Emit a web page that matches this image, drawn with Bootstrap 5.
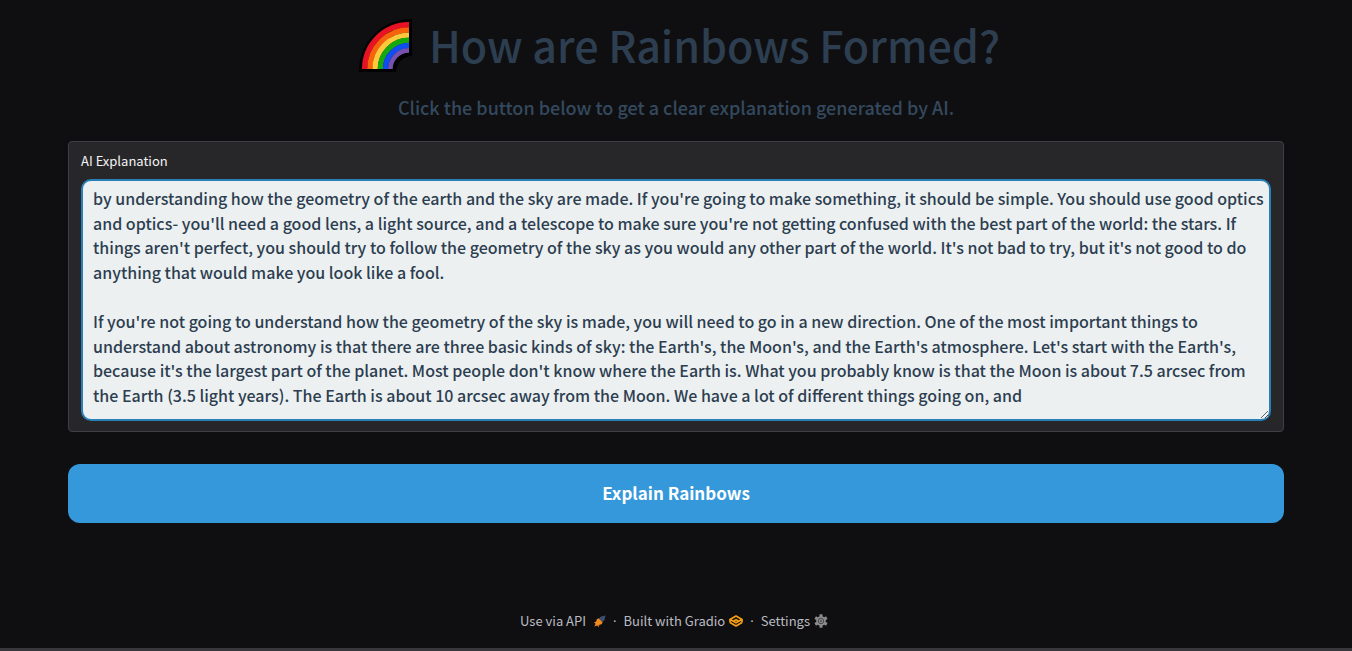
<!DOCTYPE html>
<html lang="en" data-bs-theme="dark">
<head>
<meta charset="utf-8">
<meta name="viewport" content="width=device-width, initial-scale=1">
<title>How are Rainbows Formed?</title>
<link href="https://cdn.jsdelivr.net/npm/bootstrap@5.3.0/dist/css/bootstrap.min.css" rel="stylesheet">
<style>
  body { background: #0f0f11; font-family: "Noto Sans CJK SC", "Noto Sans", sans-serif; border-bottom: 3px solid #38373b; }
  .page-main { padding: 16px 68px 0; }
  .page-title { font-size: 43px; line-height: 56px; font-weight: 500; color: #2c3e50; gap: 10px; }
  .page-title svg { margin: 0 7px; }
  .page-intro { font-size: 18px; line-height: 28px; font-weight: 500; color: #34495e; margin: 21px 0 20px; }
  .answer-panel { background: #27272a; border: 1px solid #3f3f46; border-radius: 4px; padding: 9px 12px 10px; }
  .answer-label { font-size: 13px; line-height: 20px; color: #f4f4f5; margin-bottom: 8px; }
  .answer-text, .answer-text:focus { height: 242px; padding: 5px 4px 5px 10px; border: 2px solid #2980b9; border-radius: 10px; background: #ecf0f1; color: #2c3e50; font-size: 16px; line-height: 1.54; font-weight: 500; overflow: hidden; }
  .btn-explain { --bs-btn-color: #fff; --bs-btn-bg: #3498db; --bs-btn-hover-color: #fff; --bs-btn-hover-bg: #2980b9; --bs-btn-active-bg: #2980b9; font-size: 17px; line-height: 27px; font-weight: 700; padding: 15px 16px 17px; border: 0; border-radius: 12px; margin-top: 32px; }
  .page-footer { padding: 0 4px 17px 0; font-size: 13px; line-height: 20px; color: #bbbbc2; gap: 7px; }
  .page-footer a { color: inherit; text-decoration: none; }
  .page-footer span { font-family: "Noto Sans", sans-serif; }
</style>
</head>
<body class="d-flex flex-column min-vh-100">
<main class="page-main">
  <h1 class="page-title d-flex justify-content-center align-items-end mb-0">
    <svg width="53" height="53" viewBox="0 0 53 53" aria-hidden="true">
      <path d="M0 53A52 52 0 0 1 53 0V37A16 16 0 0 0 37 53Z" fill="#000"/>
      <g fill="none" stroke-width="5.4">
        <path d="M5.7 50A44.3 44.3 0 0 1 50 5.7" stroke="#e81224"/>
        <path d="M10.9 50A39.1 39.1 0 0 1 50 10.9" stroke="#f7630c"/>
        <path d="M16.1 50A33.9 33.9 0 0 1 50 16.1" stroke="#ffc83d"/>
        <path d="M21.3 50A28.7 28.7 0 0 1 50 21.3" stroke="#16a80c"/>
        <path d="M26.5 50A23.5 23.5 0 0 1 50 26.5" stroke="#0f4df0"/>
        <path d="M31.4 50A18.6 18.6 0 0 1 50 31.4" stroke="#7651b0" stroke-width="4.6"/>
      </g>
    </svg>
    <span>How are Rainbows Formed?</span>
  </h1>
  <p class="page-intro text-center">Click the button below to get a clear explanation generated by AI.</p>
  <section class="answer-panel">
    <label class="answer-label d-block" for="answer">AI Explanation</label>
    <textarea class="answer-text form-control shadow-none" id="answer" spellcheck="false">by understanding how the geometry of the earth and the sky are made. If you're going to make something, it should be simple. You should use good optics and optics- you'll need a good lens, a light source, and a telescope to make sure you're not getting confused with the best part of the world: the stars. If things aren't perfect, you should try to follow the geometry of the sky as you would any other part of the world. It's not bad to try, but it's not good to do anything that would make you look like a fool.

If you're not going to understand how the geometry of the sky is made, you will need to go in a new direction. One of the most important things to understand about astronomy is that there are three basic kinds of sky: the Earth's, the Moon's, and the Earth's atmosphere. Let's start with the Earth's, because it's the largest part of the planet. Most people don't know where the Earth is. What you probably know is that the Moon is about 7.5 arcsec from the Earth (3.5 light years). The Earth is about 10 arcsec away from the Moon. We have a lot of different things going on, and</textarea>
  </section>
  <button type="button" class="btn btn-explain w-100">Explain Rainbows</button>
</main>
<footer class="page-footer d-flex justify-content-center align-items-center mt-auto">
  <a href="#api" class="d-flex align-items-center gap-2">Use via API
    <svg width="12" height="12" viewBox="0 0 12 12" aria-hidden="true">
      <path d="M5 3.5 7 1.5 11.5 .5 10.5 5 8.5 7Z" fill="#3c4f70"/>
      <path d="M4.6 3.3 8.6 7.3 7.6 9.2 5.4 9.8 4.6 12 3.2 10.4 .4 11.6 1.6 8.8 0 7.4 2.2 6.6 2.8 4.3Z" fill="#ee8a20"/>
      <path d="M3.2 10.4 5.4 9.8 4.6 12Z" fill="#c95c1c"/>
    </svg>
  </a>
  <span>·</span>
  <a href="#gradio" class="d-flex align-items-center gap-1">Built with Gradio
    <svg width="14" height="12" viewBox="0 0 14 12" fill="none" stroke="#f9a010" stroke-width="1.7" stroke-linejoin="round" aria-hidden="true">
      <path d="M1 4.4 7 1 13 4.4 7 7.8Z"/>
      <path d="M1 7.4 7 11 13 7.4M1 4.4V7.4M13 4.4V7.4M4.5 6 7 4.8 9.5 6"/>
    </svg>
  </a>
  <span>·</span>
  <a href="#settings" class="d-flex align-items-center gap-1">Settings
    <svg width="14" height="14" viewBox="0 0 14 14" aria-hidden="true">
      <g stroke="#8a8a8c" stroke-width="3"><path d="M7 .3V13.7M1.2 3.65 12.8 10.35M12.8 3.65 1.2 10.35"/></g>
      <circle cx="7" cy="7" r="4.8" fill="#8a8a8c"/>
      <circle cx="7" cy="7" r="2.7" fill="none" stroke="#4b4b4e"/>
      <circle cx="7" cy="7" r="1" fill="#4b4b4e"/>
    </svg>
  </a>
</footer>
<script src="https://cdn.jsdelivr.net/npm/bootstrap@5.3.0/dist/js/bootstrap.bundle.min.js"></script>
</body>
</html>
